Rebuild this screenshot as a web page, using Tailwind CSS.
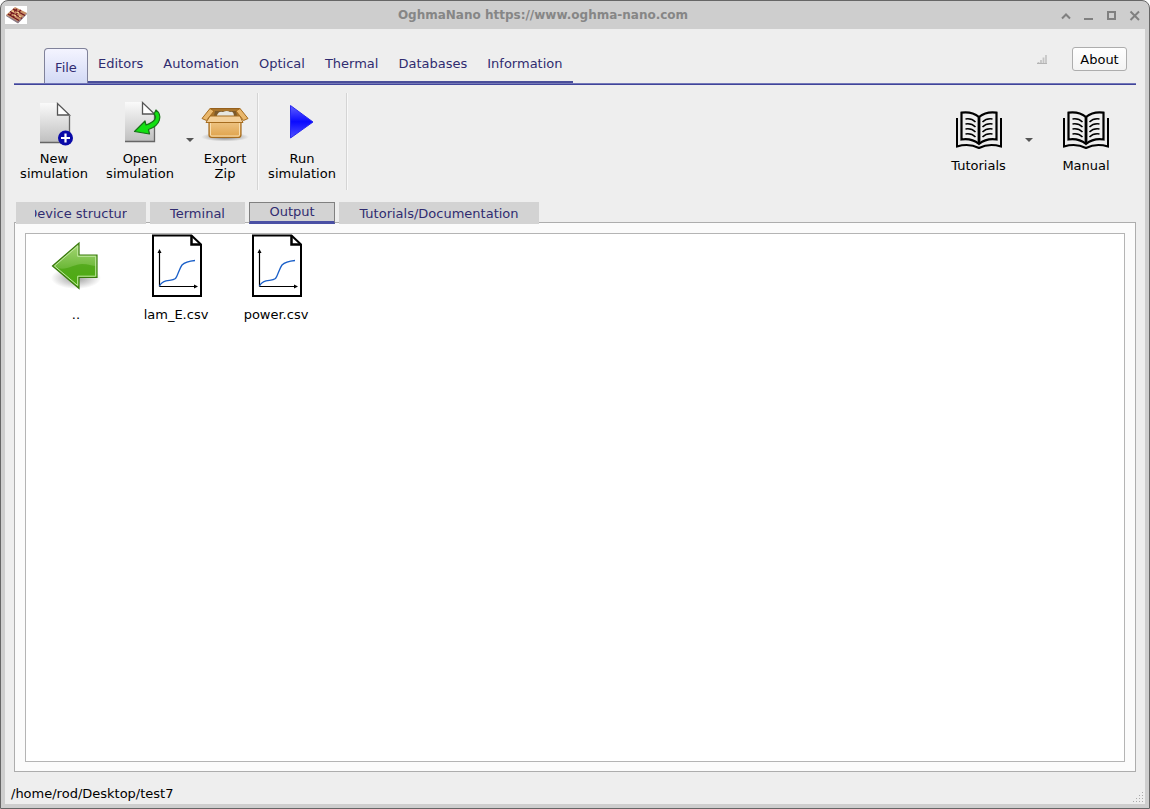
<!DOCTYPE html>
<html lang="en">
<head>
  <meta charset="UTF-8">
  <title>OghmaNano</title>
  <script src="https://cdn.jsdelivr.net/npm/@tailwindcss/browser@4"></script>
</head>
<body class="bg-white font-['DejaVu_Sans',sans-serif] text-[13px] leading-[15px] text-black">

  <!-- shared icons -->
  <svg class="block h-0 w-0">
    <defs>
      <linearGradient id="paper" x1="0" y1="0" x2="0" y2="1">
        <stop offset="0" stop-color="#fafafa"/>
        <stop offset="1" stop-color="#c0c0c0"/>
      </linearGradient>
      <symbol id="page" viewBox="0 0 48 48">
        <path d="M10 4H27L39 16V43H10Z" fill="url(#paper)"/>
        <path d="M10 43.500H39.500V17" fill="none" stroke="#666" stroke-width="1.300"/>
        <path d="M27.500 4.500V16H39.500Z" fill="#fff" stroke="#555" stroke-width="1.300"/>
      </symbol>
      <symbol id="book" viewBox="0 0 48 40" fill="none" stroke="#000">
        <path d="M24 6C19 2 13 .8 6.500 1.700V28.500C13 27.500 19 29 24 33C29 29 35 27.500 41.500 28.500V1.700C35 .8 29 2 24 6Z" stroke-width="2.200"/>
        <path d="M24 6V33" stroke-width="2.800"/>
        <path d="M2 7V35.500C9 33.500 17 33.500 24 37C31 33.500 39 33.500 46 35.500V7" stroke-width="2"/>
        <path d="M10.500 8Q16.500 7 20.500 11M10.500 13Q16.500 12 20.500 16M10.500 18Q16.500 17 20.500 21M10.500 23Q16.500 22 20.500 26M37.500 8Q31.500 7 27.500 11M37.500 13Q31.500 12 27.500 16M37.500 18Q31.500 17 27.500 21M37.500 23Q31.500 22 27.500 26" stroke-width="1.500"/>
      </symbol>
      <symbol id="plot" viewBox="0 0 50 64" fill="none">
        <path d="M1 1.500H39.500L49 10.500V62H1Z" fill="#fff" stroke="#000" stroke-width="2"/>
        <path d="M39.500 1.500V10.500H49" stroke="#000" stroke-width="2.500"/>
        <path d="M7.500 52.500V19M7.500 52.500H43" stroke="#000" stroke-width="1.200"/>
        <path d="M5.500 19L7.500 15L9.500 19ZM42 50.500L46 52.500L42 54.500Z" fill="#000"/>
        <path d="M7.500 52C9 49 11 47.500 14 46.800C18 46 21 46.500 23.500 44.500C26 41.500 27 35 30 31C33 28 38 27 43 26.500" stroke="#1a5fc8" stroke-width="1.300"/>
      </symbol>
    </defs>
  </svg>

  <div class="flex h-screen flex-col rounded-t-lg border border-[#666] bg-[#cecece] px-1 pb-1">

    <!-- title bar -->
    <header class="flex h-7 shrink-0 items-center">
      <svg class="h-[18px] w-[22px]" viewBox="0 0 22 18">
        <rect width="22" height="18" fill="#fff"/>
        <path d="M1 9L10 1L22 7L13 17Z" fill="#c98f66"/>
        <path d="M1 9L13 15.500L22 7L22 8L13 17.500L1 10Z" fill="#8b7a86"/>
        <path d="M5 5.500L17 12.500M8 3L20 9.500M3 8L14 14.500" stroke="#6b1420" stroke-width="1.200"/>
        <path d="M8 11L16 4M5 9L12 3" stroke="#7d1a20" stroke-width="1.300"/>
        <path d="M7 5L9 6M12 6L14 7M9 9L11 10M14 10L16 11" stroke="#efc48c" stroke-width="1.400"/>
      </svg>
      <h1 class="flex-1 pt-px text-center text-[12px] font-bold text-[#868686]">OghmaNano https://www.oghma-nano.com</h1>
      <div class="flex gap-[9px] pt-px pr-[3px] text-[#808080]">
        <button aria-label="Shade"><svg class="h-[14px] w-[14px]" viewBox="0 0 14 14"><path d="M3 9.500L7 5.500L11 9.500" fill="none" stroke="currentColor" stroke-width="2"/></svg></button>
        <button aria-label="Minimize"><svg class="h-[14px] w-[14px]" viewBox="0 0 14 14"><path d="M2 10H11" stroke="currentColor" stroke-width="2"/></svg></button>
        <button aria-label="Maximize"><svg class="h-[14px] w-[14px]" viewBox="0 0 14 14"><path d="M3 3H10V10H3Z" fill="none" stroke="currentColor" stroke-width="2"/></svg></button>
        <button aria-label="Close"><svg class="h-[14px] w-[14px]" viewBox="0 0 14 14"><path d="M2.500 2.500L11 11M11 2.500L2.500 11" stroke="currentColor" stroke-width="2"/></svg></button>
      </div>
    </header>

    <div class="flex min-h-0 flex-1 flex-col bg-[#eeeeee] px-[9px] pt-[18px]">

      <!-- ribbon tabs -->
      <div class="border-b border-[#40449a]">
        <div class="flex items-end border-b border-[#7478b8] pl-[30px] text-[#302c70]">
          <button class="h-[35px] w-11 rounded-t border border-b-0 border-[#80829a] bg-linear-to-b from-[#f4f4ff] to-[#d3daf5] pt-[3px]">File</button>
          <nav class="flex h-9 items-center gap-5 border-b-2 border-[#4a4e9a] px-[10px] pb-[2px]">
            <button>Editors</button>
            <button>Automation</button>
            <button>Optical</button>
            <button>Thermal</button>
            <button>Databases</button>
            <button>Information</button>
          </nav>
          <div class="ml-auto flex items-center gap-6 pr-[9px] pb-3">
            <svg class="h-3 w-3" viewBox="0 0 12 12"><path d="M2.500 11V9M5 11V7M7.500 11V4.500" stroke="#c4c4c4" stroke-width="1.800"/><path d="M10 11V2M1 10.500H11" stroke="#b4b4b4" stroke-width="1.200"/></svg>
            <button class="h-6 w-[55px] rounded-[3px] border border-[#adadad] bg-linear-to-b from-white to-[#f4f4f4] text-black">About</button>
          </div>
        </div>
      </div>

      <!-- toolbar -->
      <div class="flex h-[105px] shrink-0 pt-2">
        <button class="flex w-20 flex-col items-center pt-[6px]">
          <svg class="h-12 w-12" viewBox="0 0 48 48">
            <use href="#page" width="48" height="48"/>
            <circle cx="35.500" cy="39" r="7.500" fill="#0a0aa8"/>
            <path d="M35.500 34.500V43.500M31 39H40" stroke="#fff" stroke-width="2.200"/>
          </svg>
          <span class="mt-1">New<br>simulation</span>
        </button>
        <button class="flex w-[92px] flex-col items-center pt-[6px]">
          <svg class="h-12 w-12" viewBox="0 0 48 48">
            <use href="#page" x="-1" y="-1" width="48" height="48"/>
            <path d="M40 11C46.500 16 45 26.500 32.500 30.500L33.500 35L18.500 32.500L29 22L30 26C38.500 23 41.500 19 38 15Z" fill="#12e012" stroke="#187018" stroke-width="1.200" stroke-linejoin="round"/>
          </svg>
          <span class="mt-1">Open<br>simulation</span>
        </button>
        <button class="w-2 pb-1" aria-label="Open recent"><svg class="h-2 w-2" viewBox="0 0 8 8"><path d="M0 2H8L4 6Z" fill="#555"/></svg></button>
        <button class="flex w-[62px] flex-col items-center pt-[6px]">
          <svg class="h-12 w-12" viewBox="0 0 48 48">
            <defs>
              <linearGradient id="box" x1="0" y1="0" x2="0" y2="1"><stop offset="0" stop-color="#f0c98c"/><stop offset="1" stop-color="#dfa24a"/></linearGradient>
              <radialGradient id="boxshade"><stop offset="0" stop-color="#777"/><stop offset="1" stop-color="#777" stop-opacity="0"/></radialGradient>
            </defs>
            <ellipse cx="24" cy="38" rx="24" ry="4.500" fill="url(#boxshade)"/>
            <path d="M9 9.500H39V22H9Z" fill="#a8742c" stroke="#96601c"/>
            <path d="M12 22L14 12H35L37 22Z" fill="#7d5a2a"/>
            <path d="M16 16Q18 11.500 22 13Q26 11 29 13Q33 12 33 18H16Z" fill="#e6e6e0"/>
            <path d="M8 20H40V36Q40 38.500 37 38.500H11Q8 38.500 8 36Z" fill="url(#box)" stroke="#a66c1e" stroke-width="1.200"/>
            <path d="M9.500 23V36Q9.500 37 11 37H37Q38.500 37 38.500 36V23" fill="none" stroke="#f8deb0"/>
            <path d="M9 9.500L1 19.500L5.500 21.500L13 12ZM39 9.500L47 19.500L42.500 21.500L35 12Z" fill="#e9b76c" stroke="#a66c1e"/>
            <path d="M9 17H39L42 23.500H5Z" fill="#f3cf98" stroke="#a66c1e"/>
          </svg>
          <span class="mt-1">Export<br>Zip</span>
        </button>
        <div class="ml-px w-[2px] border-l border-[#d4d4d4] bg-[#f8f8f8]"></div>
        <button class="flex w-[86px] flex-col items-center pt-[6px]">
          <svg class="h-12 w-12" viewBox="0 0 48 48">
            <defs><linearGradient id="run" x1="0" y1="0" x2="0" y2="1"><stop offset="0" stop-color="#6060ff"/><stop offset=".5" stop-color="#0a0aff"/><stop offset="1" stop-color="#5050ff"/></linearGradient></defs>
            <path d="M12.500 6.500L35 23L12.500 39Z" fill="url(#run)" stroke="#2828f0"/>
          </svg>
          <span class="mt-1">Run<br>simulation</span>
        </button>
        <div class="ml-px w-[2px] border-l border-[#d4d4d4] bg-[#f8f8f8]"></div>

        <button class="ml-auto flex w-[93px] flex-col items-center pt-[18px]">
          <svg class="h-10 w-12"><use href="#book"/></svg>
          <span class="mt-[7px]">Tutorials</span>
        </button>
        <button class="w-2 pb-1" aria-label="More tutorials"><svg class="h-2 w-2" viewBox="0 0 8 8"><path d="M0 2H8L4 6Z" fill="#555"/></svg></button>
        <button class="ml-[3px] flex w-[100px] flex-col items-center pt-[18px]">
          <svg class="h-10 w-12"><use href="#book"/></svg>
          <span class="mt-[7px]">Manual</span>
        </button>
      </div>

      <!-- page tabs, standing one pixel over the pane's border -->
      <div class="z-10 mt-3 -mb-[2px] flex h-[22px] shrink-0 gap-1 pl-[2px] text-[#302c70]">
        <button class="flex w-[130px] items-center justify-center bg-[#d3d3d3] pt-px"><span class="flex w-[92px] justify-center overflow-hidden whitespace-nowrap">Device structure</span></button>
        <button class="w-[95px] bg-[#d3d3d3] pt-px">Terminal</button>
        <button class="w-[86px] border border-b-3 border-[#808080] border-b-[#4a50a4] bg-[#d3d3d3] pb-px">Output</button>
        <button class="w-[200px] bg-[#d3d3d3] pt-px">Tutorials/Documentation</button>
      </div>

      <!-- file view -->
      <main class="flex min-h-0 flex-1 border border-[#adadad] bg-[#fbfbfb] p-[10px] pb-[9px]">
        <div class="flex flex-1 items-start border border-[#b4b4b4] bg-white text-center">
          <button class="flex w-[100px] flex-col items-center">
            <svg class="h-16 w-[50px]" viewBox="0 0 50 64">
              <defs>
                <linearGradient id="green" x1="0" y1="0" x2="0" y2="1"><stop offset="0" stop-color="#a8d878"/><stop offset=".55" stop-color="#6cb838"/><stop offset="1" stop-color="#58b818"/></linearGradient>
                <radialGradient id="shade"><stop offset="0" stop-color="#999"/><stop offset="1" stop-color="#999" stop-opacity="0"/></radialGradient>
              </defs>
              <ellipse cx="25" cy="44" rx="25" ry="11" fill="url(#shade)"/>
              <path d="M1.500 32L28 9V21H46V43.500H28V54.500Z" fill="url(#green)" stroke="#38780c" stroke-width="1.200"/>
              <path d="M4 33C14 38 23 30 31 30C37 30 41 32 45.500 32V43H27.500V53Z" fill="#42a008" opacity=".6"/>
              <path d="M3.500 32L26.700 12V22.300H44.700V42.200H26.700V51.500Z" fill="none" stroke="#c0e8a0"/>
            </svg>
            <span class="mt-[9px]">..</span>
          </button>
          <button class="flex w-[100px] flex-col items-center">
            <svg class="h-16 w-[50px]" viewBox="-1 0 50 64" overflow="visible"><use href="#plot" width="50" height="64"/></svg>
            <span class="mt-[9px]">lam_E.csv</span>
          </button>
          <button class="flex w-[100px] flex-col items-center">
            <svg class="h-16 w-[50px]" viewBox="-1 0 50 64" overflow="visible"><use href="#plot" width="50" height="64"/></svg>
            <span class="mt-[9px]">power.csv</span>
          </button>
        </div>
      </main>

      <!-- status bar -->
      <footer class="-mx-[9px] flex h-8 shrink-0 items-end justify-between pl-[6px]">
        <span class="pb-[3px]">/home/rod/Desktop/test7</span>
        <svg class="h-3 w-3" viewBox="0 0 12 12"><path d="M9 0h1v1h-1zM9 3h1v1h-1zM6 3h1v1h-1zM9 6h1v1h-1zM6 6h1v1h-1zM3 6h1v1h-1zM9 9h1v1h-1zM6 9h1v1h-1zM3 9h1v1h-1zM0 9h1v1h-1z" fill="#aaa"/></svg>
      </footer>
    </div>
  </div>
</body>
</html>
